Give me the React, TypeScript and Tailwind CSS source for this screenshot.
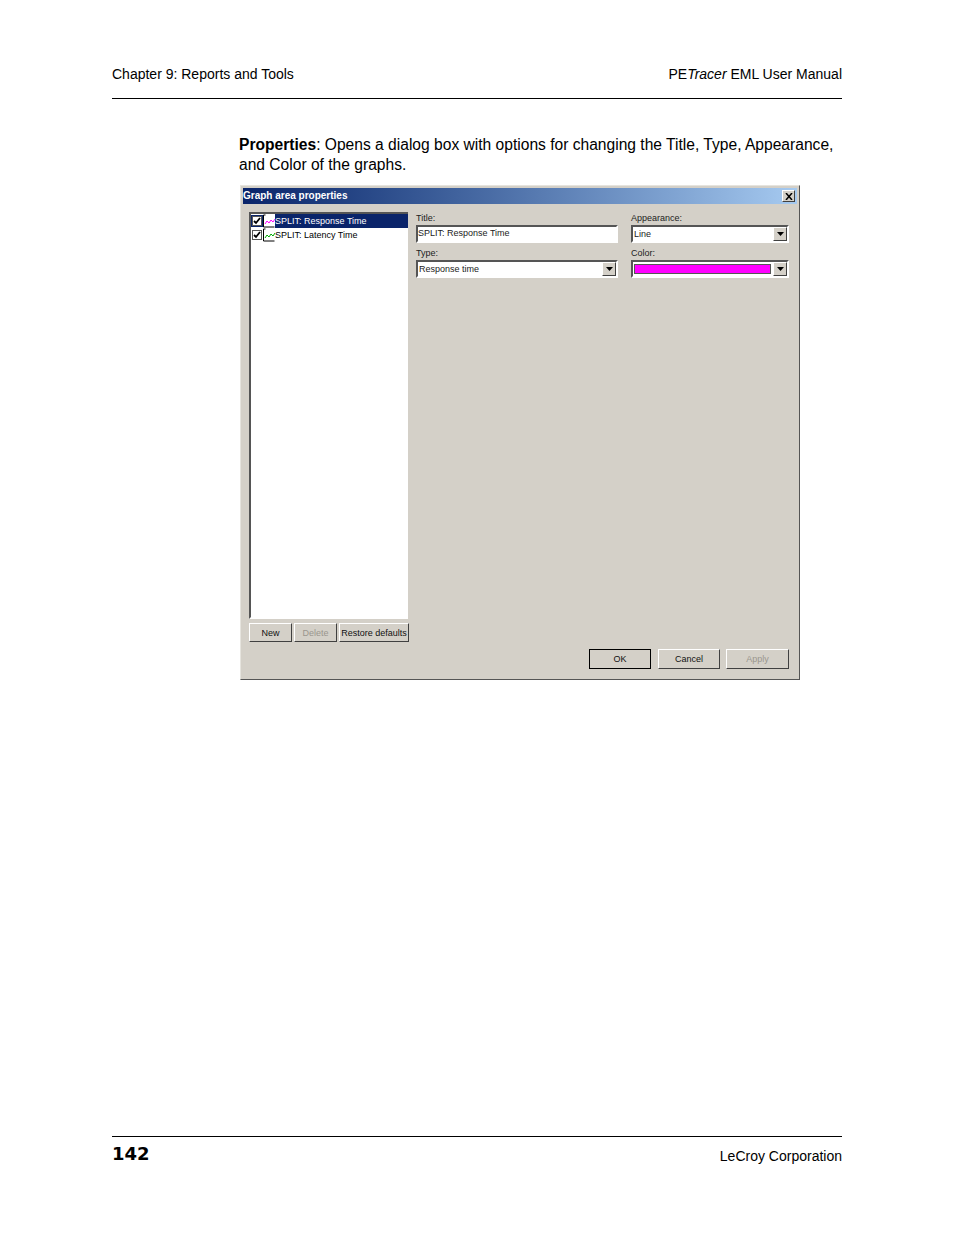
const sans = "font-['Liberation_Sans',Arial,sans-serif]";

const raised = 'border border-t-white border-l-white border-r-[#404040] border-b-[#404040] bg-[#d4d0c8]';
const sunken = 'border-2 border-t-[#555] border-l-[#555] border-r-white border-b-white bg-white';

function Arrow() {
  return (
    <div className={`w-[14px] h-[14px] flex items-center justify-center shrink-0 ${raised}`}>
      <svg width="7" height="4" viewBox="0 0 7 4">
        <path d="M0 0h7L3.5 4z" fill="#000" />
      </svg>
    </div>
  );
}

function Check({ selected }: { selected?: boolean }) {
  return (
    <div className={`w-[10px] h-[10px] border border-[#555] bg-white flex items-center justify-center shrink-0 ${selected ? 'outline outline-1 outline-[#0a246a]' : ''}`}>
      <svg width="8" height="8" viewBox="0 0 8 8">
        <path d="M1 4l2 2 4-5" fill="none" stroke="#000" strokeWidth="1.8" />
      </svg>
    </div>
  );
}

function GraphIcon({ color }: { color: string }) {
  return (
    <svg width="12" height="14" viewBox="0 0 12 14" className="shrink-0 bg-white">
      <path d="M.5 1v12h11M.5 1h2" fill="none" stroke="#000" strokeWidth="1" />
      <path d="M2 10l2-3 2 2 2-3 2 2 2-3" fill="none" stroke={color} strokeWidth="1" />
    </svg>
  );
}

function ListRow({ label, color, selected }: { label: string; color: string; selected?: boolean }) {
  return (
    <div className="h-[14px] flex items-center">
      <div className="w-[12px] flex justify-center">
        <Check selected={selected} />
      </div>
      <GraphIcon color={color} />
      <div className={`flex-1 h-full leading-[14px] ${selected ? 'bg-[#0a246a] text-white' : 'text-black'}`}>
        {label}
      </div>
    </div>
  );
}

function Btn({ label, w, h, disabled, strong }: { label: string; w: string; h: string; disabled?: boolean; strong?: boolean }) {
  return (
    <div className={`${w} ${h} flex items-center justify-center whitespace-nowrap ${raised} ${strong ? 'outline outline-1 outline-black -outline-offset-1' : ''} ${disabled ? 'text-[#9a968e]' : 'text-[#111]'}`}>
      {label}
    </div>
  );
}

function Dialog() {
  return (
    <div className="w-[560px] h-[495px] ml-[128px] mt-[10px] border border-t-[#e6e4de] border-l-[#e6e4de] border-r-[#555] border-b-[#555] bg-[#d4d0c8] flex flex-col p-[2px] text-[9px] leading-[12px] text-[#222]">
      {/* Title bar */}
      <div className="h-[16px] flex items-center justify-between bg-gradient-to-r from-[#0a246a] to-[#a6caf0] pr-[2px] shrink-0">
        <span className="text-white font-bold text-[10px]">Graph area properties</span>
        <div className={`w-[13px] h-[12px] flex items-center justify-center ${raised}`}>
          <svg width="8" height="7" viewBox="0 0 8 7">
            <path d="M1 0l6 7M7 0L1 7" stroke="#000" strokeWidth="1.5" />
          </svg>
        </div>
      </div>

      <div className="flex flex-1 pl-[6px] pt-[8px]">
        {/* Left column */}
        <div className="w-[161px] flex flex-col">
          <div className={`w-[159px] h-[407px] ${sunken} border-r-0`}>
            <ListRow label="SPLIT: Response Time" color="#f0f" selected />
            <ListRow label="SPLIT: Latency Time" color="#0a0" />
          </div>
          <div className="flex gap-[2px] mt-[4px]">
            <Btn label="New" w="w-[43px]" h="h-[19px]" />
            <Btn label="Delete" w="w-[43px]" h="h-[19px]" disabled />
            <Btn label="Restore defaults" w="w-[70px]" h="h-[19px]" />
          </div>
        </div>

        {/* Right column */}
        <div className="flex-1 flex flex-col ml-[6px]">
          <div className="flex gap-[13px]">
            <div className="w-[202px] flex flex-col">
              <span className="h-[13px]">Title:</span>
              <div className={`h-[18px] leading-[13px] ${sunken}`}>SPLIT: Response Time</div>
              <span className="h-[13px] mt-[4px]">Type:</span>
              <div className={`h-[18px] flex items-center justify-between pl-[1px] ${sunken}`}>
                <span>Response time</span>
                <Arrow />
              </div>
            </div>
            <div className="w-[158px] flex flex-col">
              <span className="h-[13px]">Appearance:</span>
              <div className={`h-[18px] flex items-center justify-between pl-[1px] ${sunken}`}>
                <span>Line</span>
                <Arrow />
              </div>
              <span className="h-[13px] mt-[4px]">Color:</span>
              <div className={`h-[18px] flex items-center justify-between pl-[1px] ${sunken}`}>
                <div className="flex-1 h-[10px] mr-[2px] bg-[#ff00ff] border border-[#555]" />
                <Arrow />
              </div>
            </div>
          </div>

          <div className="flex justify-end gap-[6px] mt-auto mb-[8px] pr-[8px]">
            <Btn label="OK" w="w-[62px]" h="h-[20px]" strong />
            <div className="ml-[1px]">
              <Btn label="Cancel" w="w-[62px]" h="h-[20px]" />
            </div>
            <Btn label="Apply" w="w-[63px]" h="h-[20px]" disabled />
          </div>
        </div>
      </div>
    </div>
  );
}

export default function App() {
  return (
    <div className={`w-[954px] h-[1235px] bg-white flex flex-col px-[112px] text-black ${sans}`}>
      <header className="mt-[66px] h-[33px] border-b border-black flex justify-between text-[14px] leading-[17px]">
        <span>Chapter 9: Reports and Tools</span>
        <span>
          PE<i>Tracer</i> EML User Manual
        </span>
      </header>

      <p className="ml-[127px] mt-[36px] w-[600px] text-[15.6px] leading-[20px]">
        <b>Properties</b>: Opens a dialog box with options for changing the Title, Type, Appearance, and Color of the graphs.
      </p>

      <Dialog />

      <footer className="mt-auto mb-[68px] h-[31px] border-t border-black flex justify-between items-start">
        <span className="font-bold text-[18px] leading-[24px] mt-[5px] font-['DejaVu_Sans',sans-serif]">142</span>
        <span className="text-[14px] leading-[17px] mt-[11px]">LeCroy Corporation</span>
      </footer>
    </div>
  );
}
